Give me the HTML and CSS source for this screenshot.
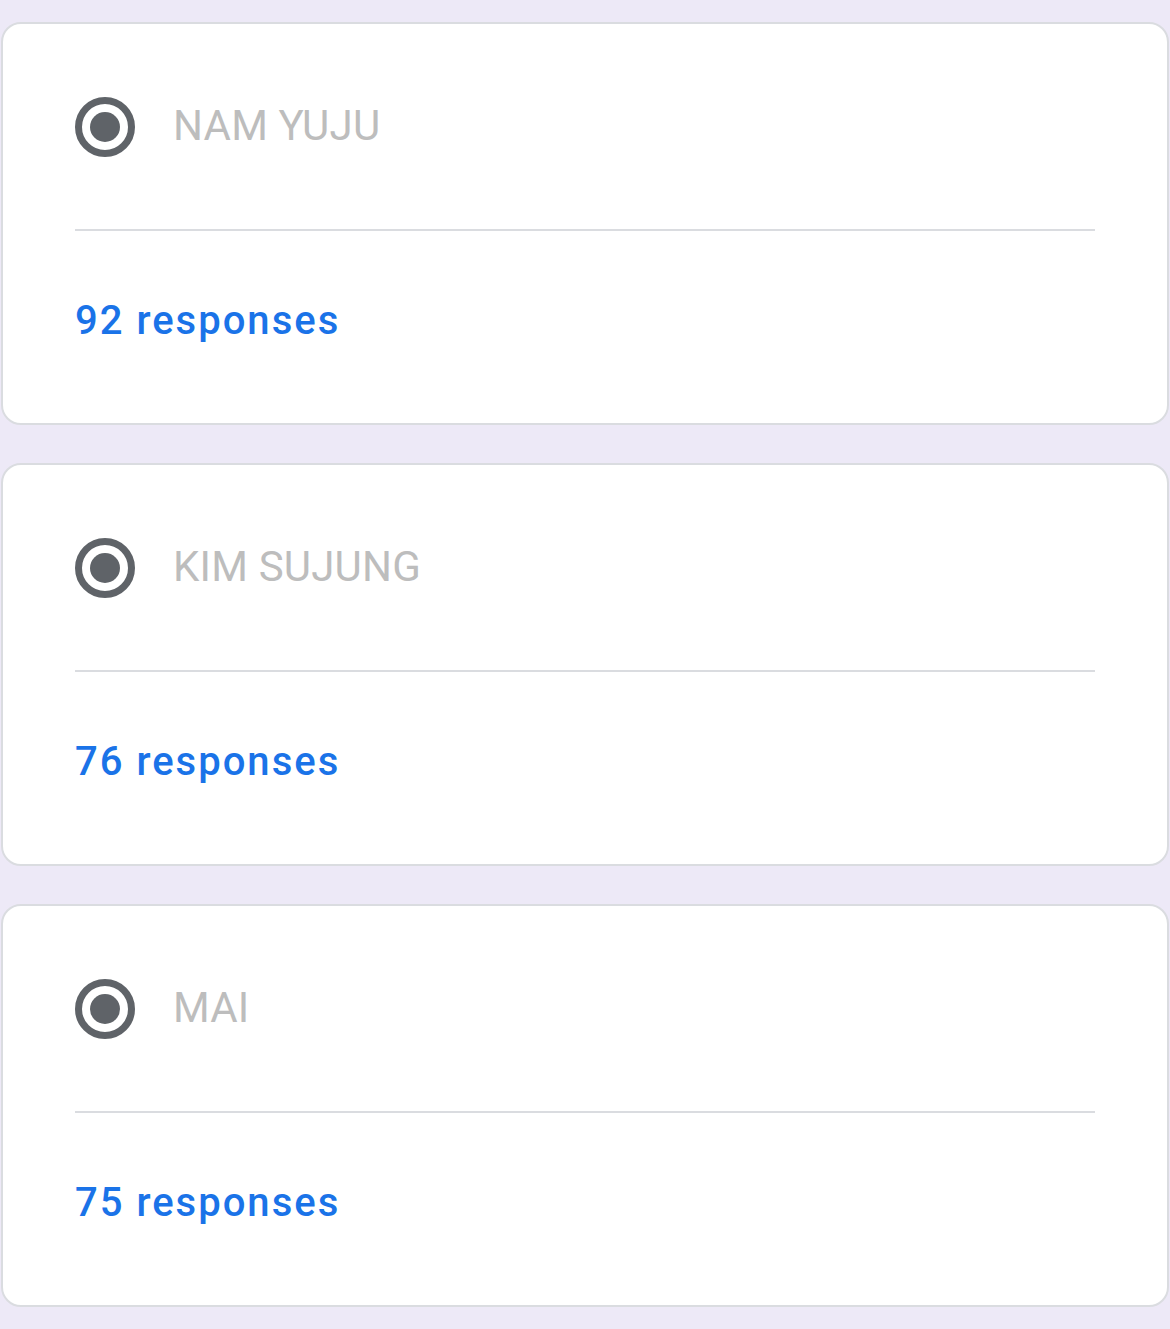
FILE: index.html
```html
<!DOCTYPE html>
<html lang="en">
<head>
  <meta charset="UTF-8">
  <title>Poll results</title>
  <meta name="viewport" content="width=device-width, initial-scale=1.0">
  <link rel="stylesheet" href="styles.css">
</head>
<body>
  <div class="list">
    <div class="card">
      <div class="option">
        <svg class="radio" viewBox="0 0 60 60" width="60" height="60">
          <circle cx="30" cy="30" r="26.5" fill="none" stroke="#5f6368" stroke-width="7"/>
          <circle cx="30" cy="30" r="15" fill="#5f6368"/>
        </svg>
        <span class="option-label">NAM YUJU</span>
      </div>
      <div class="divider"></div>
      <div class="count">92 responses</div>
    </div>

    <div class="card">
      <div class="option">
        <svg class="radio" viewBox="0 0 60 60" width="60" height="60">
          <circle cx="30" cy="30" r="26.5" fill="none" stroke="#5f6368" stroke-width="7"/>
          <circle cx="30" cy="30" r="15" fill="#5f6368"/>
        </svg>
        <span class="option-label">KIM SUJUNG</span>
      </div>
      <div class="divider"></div>
      <div class="count">76 responses</div>
    </div>

    <div class="card">
      <div class="option">
        <svg class="radio" viewBox="0 0 60 60" width="60" height="60">
          <circle cx="30" cy="30" r="26.5" fill="none" stroke="#5f6368" stroke-width="7"/>
          <circle cx="30" cy="30" r="15" fill="#5f6368"/>
        </svg>
        <span class="option-label">MAI</span>
      </div>
      <div class="divider"></div>
      <div class="count">75 responses</div>
    </div>
  </div>
</body>
</html>
```

FILE: styles.css
```css
:root {
  --bg: #ede9f7;
  --card: #ffffff;
  --border: #dadce0;
  --label: #bdbdbd;
  --icon: #5f6368;
  --link: #1a73e8;
}

* {
  margin: 0;
  padding: 0;
  box-sizing: border-box;
}

body {
  background: var(--bg);
  font-family: Roboto, "Noto Sans", sans-serif;
  min-height: 100vh;
}

.list {
  display: flex;
  flex-direction: column;
  gap: 38px;
  padding: 22px 1px 0 1px;
}

.card {
  background: var(--card);
  border: 2px solid var(--border);
  border-radius: 20px;
  height: 403px;
  padding: 73px 72px 0 72px;
}

.option {
  display: flex;
  align-items: center;
  height: 60px;
}

.radio {
  flex-shrink: 0;
  display: block;
}

.option-label {
  margin-left: 38px;
  margin-bottom: 3px;
  font-size: 42px;
  color: var(--label);
  letter-spacing: 0.2px;
}

.divider {
  height: 2px;
  background: var(--border);
  margin-top: 72px;
  width: 1020px;
}

.count {
  margin-top: 66px;
  font-size: 40px;
  line-height: 48px;
  font-weight: 500;
  color: var(--link);
  letter-spacing: 2px;
}
```
